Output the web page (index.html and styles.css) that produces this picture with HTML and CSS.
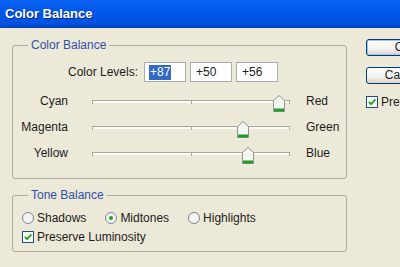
FILE: index.html
```html
<!DOCTYPE html>
<html lang="en">
<head>
<meta charset="UTF-8">
<meta name="viewport" content="width=device-width, initial-scale=1.0">
<title>Color Balance</title>
<link rel="stylesheet" href="styles.css">
</head>
<body>
<div class="window">
<div class="titlebar">Color Balance</div>
<div class="content">
<div class="main">
<fieldset class="group balance">
<legend>Color Balance</legend>
<div class="levels-row">
<span class="levels-label">Color Levels:</span>
<div class="field"><span class="sel">+87</span></div>
<div class="field">+50</div>
<div class="field">+56</div>
</div>
<div class="slider-row">
<span class="left-label">Cyan</span>
<div class="track">
<span class="tick tick-start"></span><span class="tick tick-mid"></span><span class="tick tick-end"></span>
<div class="thumb" style="left: 93.5%"><svg width="12" height="17" viewBox="0 0 12 17"><path d="M6 0.5 L11.5 5.5 L11.5 16.5 L0.5 16.5 L0.5 5.5 Z" fill="#f4f7f1" stroke="#8f968a"/><rect x="1" y="13.5" width="10" height="3" fill="#1f9c2a"/></svg></div>
</div>
<span class="right-label">Red</span>
</div>
<div class="slider-row">
<span class="left-label">Magenta</span>
<div class="track">
<span class="tick tick-start"></span><span class="tick tick-mid"></span><span class="tick tick-end"></span>
<div class="thumb" style="left: 75%"><svg width="12" height="17" viewBox="0 0 12 17"><path d="M6 0.5 L11.5 5.5 L11.5 16.5 L0.5 16.5 L0.5 5.5 Z" fill="#f4f7f1" stroke="#8f968a"/><rect x="1" y="13.5" width="10" height="3" fill="#1f9c2a"/></svg></div>
</div>
<span class="right-label">Green</span>
</div>
<div class="slider-row">
<span class="left-label">Yellow</span>
<div class="track">
<span class="tick tick-start"></span><span class="tick tick-mid"></span><span class="tick tick-end"></span>
<div class="thumb" style="left: 78%"><svg width="12" height="17" viewBox="0 0 12 17"><path d="M6 0.5 L11.5 5.5 L11.5 16.5 L0.5 16.5 L0.5 5.5 Z" fill="#f4f7f1" stroke="#8f968a"/><rect x="1" y="13.5" width="10" height="3" fill="#1f9c2a"/></svg></div>
</div>
<span class="right-label">Blue</span>
</div>
</fieldset>

<fieldset class="group tone">
<legend>Tone Balance</legend>
<div class="radio-row">
<label class="radio"><svg width="12" height="12" viewBox="0 0 12 12"><circle cx="6" cy="6" r="5.5" fill="#f4f4f0" stroke="#7c8794"/></svg>Shadows</label>
<label class="radio"><svg width="12" height="12" viewBox="0 0 12 12"><circle cx="6" cy="6" r="5.5" fill="#f4f4f0" stroke="#7c8794"/><circle cx="6" cy="6" r="2" fill="#24a22c"/></svg>Midtones</label>
<label class="radio"><svg width="12" height="12" viewBox="0 0 12 12"><circle cx="6" cy="6" r="5.5" fill="#f4f4f0" stroke="#7c8794"/></svg>Highlights</label>
</div>
<label class="check"><svg width="12" height="12" viewBox="0 0 12 12"><rect x="0.5" y="0.5" width="11" height="11" fill="#fbfbf8" stroke="#1c5180"/><path d="M2.8 5.8 L5 8.2 L9.4 3.4" fill="none" stroke="#21a121" stroke-width="1.8"/></svg>Preserve Luminosity</label>
</fieldset>
</div>

<div class="side">
<div class="btn btn-default">OK</div>
<div class="btn">Cancel</div>
<label class="check preview"><svg width="12" height="12" viewBox="0 0 12 12"><rect x="0.5" y="0.5" width="11" height="11" fill="#fbfbf8" stroke="#1c5180"/><path d="M2.8 5.8 L5 8.2 L9.4 3.4" fill="none" stroke="#21a121" stroke-width="1.8"/></svg>Preview</label>
</div>
</div>
</div>
</body>
</html>
```

FILE: styles.css
```css
body {
margin: 0;
background-color: #ece9d8;
font-family: "Liberation Sans", Arial, sans-serif;
font-size: 12px;
color: #1c1c1c;
overflow: hidden;
}

.window {
width: 400px;
height: 267px;
overflow: hidden;
}

.titlebar {
height: 28px;
box-sizing: border-box;
padding: 6px 0 0 5px;
background: linear-gradient(#0a62f2, #0057e8 40%, #0052e0 85%, #0040bf);
color: #fff;
font-size: 13px;
font-weight: bold;
text-shadow: 1px 1px 0 #0a2a8a;
}

.content {
display: flex;
padding: 10px 0 0 12px;
}

.main {
width: 335px;
flex-shrink: 0;
}

/* Group boxes */
.group {
box-sizing: border-box;
width: 335px;
min-width: 0;
margin: 0;
padding: 0 0 12px 0;
border: 1px solid #aeab9c;
border-radius: 3px;
}

.group legend {
margin-left: 15px;
padding: 0 3px;
line-height: 14px;
color: #2f50a8;
}

.tone {
margin-top: 9px;
padding-bottom: 7px;
}

.levels-row {
display: flex;
align-items: center;
margin-top: 10px;
height: 20px;
}

.levels-label {
width: 125px;
text-align: right;
margin-right: 6px;
}

.field {
box-sizing: border-box;
width: 42px;
height: 20px;
margin-right: 4px;
padding: 2px 0 0 5px;
background-color: #fff;
border: 1px solid #a5acb5;
line-height: 15px;
}

.sel {
display: inline-block;
background-color: #3169c6;
color: #fff;
padding: 0 1px;
margin-left: -1px;
}

.slider-row {
display: flex;
align-items: center;
height: 26px;
}

.levels-row + .slider-row {
margin-top: 6px;
}

.left-label {
width: 55px;
text-align: right;
}

.right-label {
margin-left: 16px;
}

.track {
position: relative;
width: 198px;
height: 26px;
margin-left: 24px;
}

.track::before {
content: "";
position: absolute;
left: 0;
right: 0;
top: 12px;
height: 1px;
background-color: #a9a79a;
border-bottom: 2px solid #fbfbf7;
}

.tick {
position: absolute;
top: 12px;
width: 1px;
height: 4px;
background-color: #a9a79a;
}

.tick-start {
left: 0;
}

.tick-mid {
left: 50%;
}

.tick-end {
right: 0;
}

.thumb {
position: absolute;
top: 7px;
margin-left: -4px;
width: 12px;
height: 17px;
}

.thumb svg {
display: block;
}

/* Radios and checkboxes */
.radio-row {
display: flex;
margin-top: 9px;
height: 14px;
align-items: center;
}

.radio {
display: flex;
align-items: center;
margin-left: 9px;
margin-right: 10px;
}

.radio svg,
.check svg {
margin-right: 3px;
}

.check {
display: flex;
align-items: center;
height: 14px;
margin-top: 5px;
margin-left: 9px;
}

/* Side buttons */
.side {
margin-left: 19px;
padding-top: 1px;
flex-shrink: 0;
}

.btn {
box-sizing: border-box;
width: 75px;
height: 17px;
margin-bottom: 11px;
border: 1px solid #003c74;
border-radius: 3px;
background: linear-gradient(#ffffff, #f3f2ec 60%, #d8d3c7);
text-align: center;
line-height: 15px;
}

.btn-default {
box-shadow: inset 0 0 0 1px #a8c4ee;
}

.preview {
margin-left: 0;
margin-top: 8px;
}
```
